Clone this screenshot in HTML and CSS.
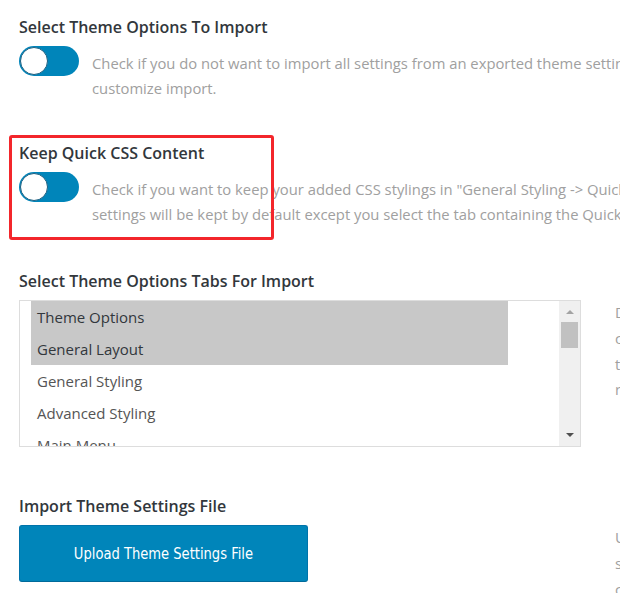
FILE: index.html
```html
<!DOCTYPE html>
<html lang="en">
<head>
    <meta charset="UTF-8">
    <meta name="viewport" content="width=device-width, initial-scale=1.0">
    <title>Import Theme Settings</title>
    <link rel="stylesheet" href="styles.css">
</head>
<body>
    <div class="panel">
        <div class="option">
            <h4>Select Theme Options To Import</h4>
            <div class="row">
                <div class="toggle"><span class="knob"></span></div>
                <p class="desc">Check if you do not want to import all settings from an exported theme settings file but want to<br>customize import.</p>
            </div>
        </div>

        <div class="option marked">
            <h4>Keep Quick CSS Content</h4>
            <div class="row">
                <div class="toggle"><span class="knob"></span></div>
                <p class="desc">Check if you want to keep your added CSS stylings in "General Styling -&gt; Quick CSS". These<br>settings will be kept by default except you select the tab containing the Quick CSS for import.</p>
            </div>
            <div class="mark"></div>
        </div>

        <div class="option tabs">
            <h4>Select Theme Options Tabs For Import</h4>
            <div class="row">
                <div class="listbox">
                    <ul class="items">
                        <li class="selected">Theme Options</li>
                        <li class="selected">General Layout</li>
                        <li>General Styling</li>
                        <li>Advanced Styling</li>
                        <li>Main Menu</li>
                        <li>Header</li>
                    </ul>
                    <div class="scrollbar">
                        <span class="arrow up"></span>
                        <span class="thumb"></span>
                        <span class="arrow down"></span>
                    </div>
                </div>
                <p class="desc side">Deselect the tabs you do not want to import from the file. Use Ctrl key<br>click to select multiple tabs. Only the selected<br>tabs will be imported, all other settings will<br>remain unchanged.</p>
            </div>
        </div>

        <div class="option">
            <h4>Import Theme Settings File</h4>
            <div class="row">
                <button class="upload"><span>Upload Theme Settings File</span></button>
                <p class="desc side">Upload a previously exported theme settings file. The<br>settings will be imported according to your selection,<br>click on the button to select the file.</p>
            </div>
        </div>
    </div>
</body>
</html>
```

FILE: styles.css
```css
body {
    margin: 0;
    background-color: #FFFFFF;
    font-family: 'Open Sans', 'Noto Sans', sans-serif;
    overflow: hidden;
}
.panel {
    padding: 17px 0 0 19px;
    width: 1200px;
}
.option {
    position: relative;
    margin-bottom: 42px;
}
.option.marked {
    margin-bottom: 44px;
}
.option.tabs {
    margin-bottom: 49px;
}
h4 {
    margin: 0 0 9px 0;
    font-size: 16px;
    line-height: 20px;
    font-weight: 600;
    color: #32373c;
}
.row {
    display: flex;
    align-items: flex-start;
}
.desc {
    margin: 0;
    padding-top: 5px;
    font-size: 14.8px;
    line-height: 25px;
    color: #a0a0a0;
    white-space: nowrap;
}
.desc.side {
    padding-top: 0;
    line-height: 25.8px;
    margin-left: 34px;
}
.toggle {
    display: flex;
    align-items: center;
    width: 60px;
    height: 30px;
    padding: 0 1px;
    box-sizing: border-box;
    border-radius: 15px;
    background-color: #0085ba;
    margin-right: 13px;
    flex-shrink: 0;
}
.knob {
    width: 28px;
    height: 28px;
    box-sizing: border-box;
    border-radius: 50%;
    background: #FFFFFF;
    border: 1px solid #1e5f80;
}
.mark {
    position: absolute;
    left: -10px;
    top: -8px;
    width: 265px;
    height: 105px;
    box-sizing: border-box;
    border: 3px solid #f3262b;
    border-radius: 3px;
}
.listbox {
    display: flex;
    width: 562px;
    height: 147px;
    box-sizing: border-box;
    border: 1px solid #dddddd;
    overflow: hidden;
    flex-shrink: 0;
}
.items {
    list-style: none;
    margin: 0;
    padding: 0 0 0 11px;
    flex: 1;
}
.items li {
    width: 477px;
    height: 32px;
    line-height: 32px;
    padding-left: 6px;
    box-sizing: border-box;
    font-size: 15px;
    color: #555555;
}
.items li.selected {
    background-color: #c8c8c8;
    color: #32373c;
}
.scrollbar {
    display: flex;
    flex-direction: column;
    align-items: center;
    width: 21px;
    background-color: #f0f0f0;
    flex-shrink: 0;
}
.arrow {
    width: 0;
    height: 0;
    border-left: 4px solid transparent;
    border-right: 4px solid transparent;
}
.arrow.up {
    margin-top: 9px;
    border-bottom: 4px solid #a3a3a3;
}
.arrow.down {
    margin-top: auto;
    margin-bottom: 9px;
    border-top: 4px solid #505050;
}
.thumb {
    width: 17px;
    height: 26px;
    margin-top: 8px;
    background-color: #c1c1c1;
}
.upload {
    width: 289px;
    height: 57px;
    padding: 0;
    flex-shrink: 0;
    background-color: #0085ba;
    border: 1px solid #0073aa;
    border-bottom-color: #006a9a;
    border-radius: 3px;
    color: #FFFFFF;
    font-family: 'DejaVu Sans Condensed', 'Liberation Sans', sans-serif;
    font-size: 16px;
    cursor: pointer;
}
.upload span {
    display: inline-block;
    transform: scaleX(0.91);
    white-space: nowrap;
}
.upload + .desc.side {
    margin-left: 307px;
}
```
